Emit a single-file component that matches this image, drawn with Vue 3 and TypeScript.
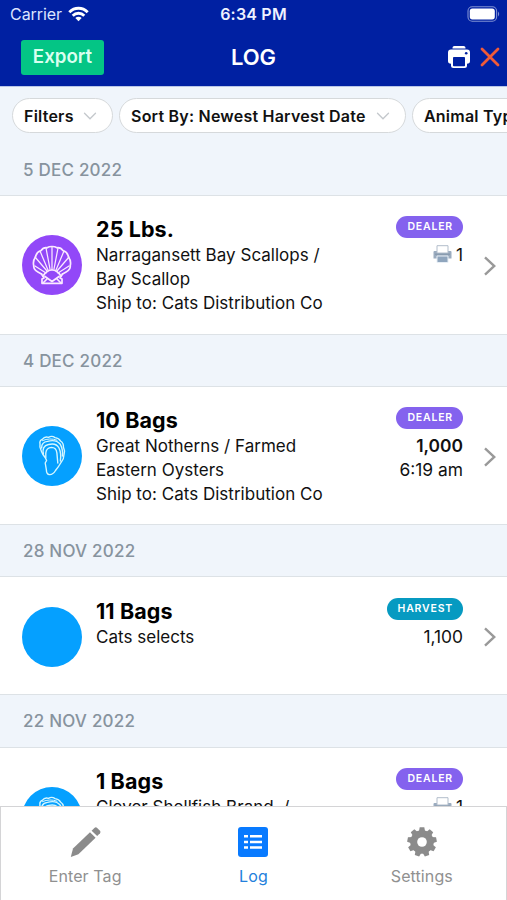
<script setup lang="ts">
type Species = 'scallop' | 'oyster' | 'none'

interface Entry {
  date: string
  species: Species
  amount: string
  lines: string[]
  badge: 'DEALER' | 'HARVEST'
  prints?: string
  count?: string
  strong?: boolean
  time?: string
  height: number
  headHeight: number
}

const filters: string[] = ['Filters', 'Sort By: Newest Harvest Date', 'Animal Type']

const entries: Entry[] = [
  {
    date: '5 DEC 2022',
    species: 'scallop',
    amount: '25 Lbs.',
    lines: ['Narragansett Bay Scallops /', 'Bay Scallop', 'Ship to: Cats Distribution Co'],
    badge: 'DEALER',
    prints: '1',
    height: 139,
    headHeight: 51,
  },
  {
    date: '4 DEC 2022',
    species: 'oyster',
    amount: '10 Bags',
    lines: ['Great Notherns / Farmed', 'Eastern Oysters', 'Ship to: Cats Distribution Co'],
    badge: 'DEALER',
    count: '1,000',
    strong: true,
    time: '6:19 am',
    height: 138,
    headHeight: 52,
  },
  {
    date: '28 NOV 2022',
    species: 'none',
    amount: '11 Bags',
    lines: ['Cats selects'],
    badge: 'HARVEST',
    count: '1,100',
    height: 118,
    headHeight: 52,
  },
  {
    date: '22 NOV 2022',
    species: 'oyster',
    amount: '1 Bags',
    lines: ['Clever Shellfish Brand  /'],
    badge: 'DEALER',
    prints: '1',
    height: 139,
    headHeight: 53,
  },
]

const ribs: string[] = [
  'M24 38 L13 31', 'M25 36 L13 22', 'M26 35 L18 16', 'M28 34 L24 13',
  'M32 34 L36 13', 'M34 35 L42 16', 'M35 36 L47 22', 'M36 38 L47 31',
  'M30 34 V12',
]
</script>

<template>
  <div class="screen">
    <header class="top">
      <div class="status">
        <div class="carrier">
          <span>Carrier</span>
          <svg width="21" height="16" viewBox="0 0 21 16" fill="none" stroke="#fff" stroke-width="2.9">
            <path d="M1.3 6.2 C6.6 1 14.4 1 19.7 6.2" />
            <path d="M4.7 9.7 C8 6.5 13 6.5 16.3 9.7" />
            <path d="M7.3 12 C9.2 10.3 11.8 10.3 13.7 12 L10.5 15.2 Z" fill="#fff" stroke="none" />
          </svg>
        </div>
        <span class="clock">6:34 PM</span>
        <svg class="battery" width="34" height="16" viewBox="0 0 34 16">
          <rect x="1" y="0.8" width="28.6" height="14.4" rx="4.2" fill="none" stroke="#7f90d2" stroke-width="1.1" />
          <rect x="2.8" y="2.6" width="25" height="10.8" rx="2.6" fill="#fff" />
          <path d="M31 5.5 Q33.4 8 31 10.5 Z" fill="#7f90d2" />
        </svg>
      </div>
      <div class="nav">
        <div class="side"><button class="export">Export</button></div>
        <h1>LOG</h1>
        <div class="side actions">
          <svg width="24" height="24" viewBox="0 0 24 24">
            <path d="M5.5 3.4 V2.8 Q5.5 1 7.4 1 H16.6 Q18.5 1 18.5 2.8 V3.4 Z" fill="#fff" />
            <path d="M4 4.4 H20 Q23 4.4 23 7.4 V16 Q23 18.7 20 18.7 V20.5 Q20 23 17.5 23 H6.5 Q4 23 4 20.5 V18.7 Q1 18.7 1 16 V7.4 Q1 4.4 4 4.4 Z" fill="#fff" />
            <rect x="6" y="12" width="12" height="9.2" rx="0.8" fill="#0020a2" />
            <circle cx="19.2" cy="8.2" r="1.3" fill="#0020a2" />
          </svg>
          <svg width="20" height="20" viewBox="0 0 20 20" fill="none" stroke="#f05a38" stroke-width="2.8" stroke-linecap="round">
            <path d="M2 2 L18 18 M18 2 L2 18" />
          </svg>
        </div>
      </div>
    </header>

    <div class="filters">
      <button v-for="(f, i) in filters" :key="f" class="pill" :class="'pill-' + i">
        <span>{{ f }}</span>
        <svg width="14" height="8" viewBox="0 0 14 8" fill="none" stroke="#c4c8cc" stroke-width="1.3" stroke-linecap="round">
          <path d="M1.5 1.2 L7 6.8 L12.5 1.2" />
        </svg>
      </button>
    </div>

    <main class="list">
      <section v-for="e in entries" :key="e.date">
        <h2 :style="{ height: e.headHeight + 'px' }">{{ e.date }}</h2>
        <article :style="{ height: e.height + 'px' }">
          <div class="avatar" :class="e.species">
            <svg v-if="e.species === 'scallop'" width="60" height="60" viewBox="0 0 60 60" fill="none" stroke="#fbeaff" stroke-width="1.7" stroke-linejoin="round" stroke-linecap="round">
              <path d="M19.5 39 Q11 35 11.8 31 Q10.5 26 13.5 22 Q14.5 17 18.8 15.8 Q21.5 12.2 25 12.8 Q27 11.5 30 11.5 Q33 11.5 35 12.8 Q38.5 12.2 41.2 15.8 Q45.5 17 46.5 22 Q49.5 26 48.2 31 Q49 35 40.5 39" />
              <path v-for="r in ribs" :key="r" :d="r" stroke-width="1.25" />
              <path d="M19.5 39 L22 43 L20 44 V48.3 H40 V44 L38 43 L40.5 39" />
              <path d="M21 41 Q25 34.8 30 34.8 Q35 34.8 39 41 M23 41.5 L30 46.5 L37 41.5 M21 48 L25 44 M39 48 L35 44" />
            </svg>
            <svg v-else-if="e.species === 'oyster'" width="60" height="60" viewBox="0 0 60 60" fill="none" stroke="#d5f6ff" stroke-width="1.4" stroke-linejoin="round" stroke-linecap="round">
              <path d="M23.5 32 Q20.5 28.5 19.3 25 Q17.2 21 18 18 Q17.2 14.5 20.5 13.2 Q22.5 10.2 26.5 11.3 Q30 9.3 33 11.6 Q37 12 38.5 15 Q41.8 17.2 41.4 21 Q43.2 24.5 42 28.5 Q42 33 39 36.5 Q36.5 41 33.5 44.5 Q31 48.8 27.5 48.6 Q24.4 48.4 24.4 44 L23.2 37 L24.6 34.5 Z" />
              <path d="M23.8 31.5 V27 Q24.5 21.6 29.5 21.4 Q34.2 21.4 34.9 27 L35.8 37" />
              <path d="M21.4 28 Q19.6 20 26.5 18.5 Q34 16.4 37 22 Q39.4 27 38.4 35" />
              <path d="M19.6 22 Q19.5 16 25.5 15.4 Q34 13 38.3 18.3 Q41.2 23.5 40.4 30" />
              <path d="M20.5 14.6 Q28 11.4 35 14.2" stroke-width="1" />
            </svg>
          </div>
          <div class="info">
            <h3>{{ e.amount }}</h3>
            <p v-for="l in e.lines" :key="l">{{ l }}</p>
          </div>
          <div class="meta">
            <span class="badge" :class="e.badge.toLowerCase()">{{ e.badge }}</span>
            <span v-if="e.prints" class="prints">
              <svg width="19" height="18" viewBox="0 0 19 18">
                <path d="M1.5 6 H17.5 Q18.5 6 18.5 7 V13.5 H.5 V7 Q.5 6 1.5 6 Z" fill="#9bacbf" />
                <path d="M4 8 V.7 H15 V8 Z" fill="#fff" stroke="#b2bdcb" stroke-width="1" />
                <path d="M2 9.2 H17" stroke="#8294a9" stroke-width="1" />
                <path d="M4 11 H15 V17.5 H4 Z" fill="#8fa5bd" stroke="#e7eef5" stroke-width="1" />
              </svg>
              <span>{{ e.prints }}</span>
            </span>
            <span v-if="e.count" class="count" :class="{ strong: e.strong }">{{ e.count }}</span>
            <span v-if="e.time" class="time">{{ e.time }}</span>
          </div>
          <svg class="chevron" width="12" height="20" viewBox="0 0 12 20" fill="none" stroke="#999" stroke-width="2.4">
            <path d="M1 1.3 L10.3 10 L1 18.7" />
          </svg>
        </article>
      </section>
    </main>

    <nav class="tabs">
      <a class="tab">
        <svg width="32" height="32" viewBox="0 0 32 32" fill="#8b8b8b">
          <path d="M22.6 4.7 L25.4 1.9 Q26.8 .7 28.2 1.9 L31 4.7 Q32 6 31 7.3 L28.2 10.1 Z" />
          <path d="M21 6.3 L26.6 11.8 L9.4 28.2 L1.8 31 L4 22.6 Z" />
        </svg>
        <span>Enter Tag</span>
      </a>
      <a class="tab active">
        <svg width="32" height="32" viewBox="0 0 32 32">
          <rect x="1" y="1" width="30" height="30" rx="3" fill="#087aff" />
          <g stroke="#fff" stroke-width="2.5">
            <path d="M7 10.3 H11 M7 15.9 H11 M7 21.5 H11" />
            <path d="M13 10.3 H25 M13 15.9 H25 M13 21.5 H25" />
          </g>
        </svg>
        <span>Log</span>
      </a>
      <a class="tab">
        <svg width="32" height="32" viewBox="0 0 32 32">
          <g fill="#8b8b8b">
            <circle cx="16" cy="16" r="11.8" />
            <path v-for="n in 9" :key="n" d="M12.7 6.5 L13.7 1.3 H18.3 L19.3 6.5 Z" :transform="`rotate(${(n - 1) * 40} 16 16)`" />
          </g>
          <circle cx="16" cy="16" r="4.8" fill="#fff" />
        </svg>
        <span>Settings</span>
      </a>
    </nav>
  </div>
</template>

<style>
body { margin: 0; overflow: hidden; }
</style>

<style scoped>
.screen {
  box-sizing: border-box;
  width: 507px;
  height: 900px;
  display: flex;
  flex-direction: column;
  overflow: hidden;
  background: #fff;
  color: #111;
  font-family: Inter, "Liberation Sans", sans-serif;
}
h1, h2, h3, p { margin: 0; }
button { font: inherit; border: 0; }
svg { display: block; flex: none; }
.top { box-sizing: border-box; height: 87px; flex: none; background: #0020a2; color: #fff; border-bottom: 1px solid #b9c6e8; }
.status {
  height: 29px;
  display: grid;
  grid-template-columns: 1fr auto 1fr;
  align-items: center;
  padding: 0 6px 0 10px;
  font-size: 16px;
}
.carrier { display: flex; align-items: center; gap: 6px; color: #dbe4ff; letter-spacing: -0.05px; }
.carrier svg { margin-top: -2px; }
.carrier span, .clock { margin-top: -1px; }
.clock { font-weight: 600; letter-spacing: 0.2px; color: #eef2ff; margin-right: 4px; }
.battery { justify-self: end; margin-top: -2px; }
.nav { height: 56px; display: grid; grid-template-columns: 1fr auto 1fr; align-items: center; padding: 0 7px 0 21px; }
.export {
  width: 83px;
  height: 35px;
  padding: 0 0 1px;
  border-radius: 3px;
  background: #04c585;
  color: #d9fff0;
  font-size: 18.7px;
  font-weight: 600;
}
h1 { font-size: 22px; font-weight: 600; margin-right: 14px; margin-top: -1px; }
.actions { display: flex; justify-content: flex-end; align-items: center; gap: 9px; }

.filters { height: 58px; flex: none; display: flex; gap: 6px; padding: 11px 0 0 12px; box-sizing: border-box; background: #f0f5fb; overflow: hidden; }
.pill {
  flex: none;
  box-sizing: border-box;
  height: 35px;
  display: flex;
  align-items: center;
  justify-content: space-between;
  padding: 0 15px 0 11px;
  border: 1px solid #d6d9db;
  border-radius: 18px;
  background: #fff;
  color: #111;
  font-size: 16px;
  font-weight: 600;
  letter-spacing: 0.22px;
  white-space: nowrap;
}
.pill-0 { width: 101px; }
.pill-1 { width: 287px; }
.pill-2 { width: 160px; }

.list { flex: 1; min-height: 0; overflow: hidden; }
h2 {
  box-sizing: border-box;
  padding: 0 23px;
  border-bottom: 1px solid #dde2e6;
  background: #f0f5fb;
  color: #87939e;
  font-size: 17px;
  line-height: 53px;
  font-weight: 500;
  letter-spacing: 0.22px;
}
section:first-child h2 { line-height: 51px; }
article { box-sizing: border-box; display: flex; border-bottom: 1px solid #dde2e6; padding: 20px 11px 0 22px; background: #fff; }
section:nth-child(3) article { padding-top: 21px; }
.avatar { width: 60px; height: 60px; border-radius: 50%; background: #05a0ff; flex: none; margin-top: 19px; }
.avatar.none { margin-top: 9px; }
.avatar.scallop { background: #9248f8; }
.info { flex: 1; margin-left: 14px; }
h3 { font-size: 21.5px; line-height: 27px; font-weight: 700; letter-spacing: 0.1px; color: #000; white-space: nowrap; }
p { font-size: 17px; line-height: 24.2px; letter-spacing: 0.02px; white-space: pre; }
.meta { display: flex; flex-direction: column; align-items: flex-end; font-size: 17.4px; line-height: 24px; }
.badge {
  height: 22px;
  margin-bottom: 5px;
  padding: 0 10px 0 11px;
  border-radius: 11px;
  color: #fff;
  font-size: 10.5px;
  line-height: 22px;
  font-weight: 600;
  letter-spacing: 0.8px;
}
.dealer { background: #8462ee; }
.harvest { background: #069ac1; }
.prints { display: flex; align-items: center; gap: 4px; }
.prints svg { margin-top: -3px; }
.strong { font-weight: 600; }
.chevron { margin: 40px 0 0 21px; }
article:has(.none) .chevron { margin-top: 29px; }

.tabs { box-sizing: border-box; height: 94px; flex: none; display: grid; grid-template-columns: repeat(3, 1fr); border: 1px solid #d4d4d6; border-bottom: 0; background: #fff; }
.tab { display: flex; flex-direction: column; align-items: center; padding-top: 19px; gap: 8px; color: #909090; font-size: 16px; line-height: 20px; letter-spacing: 0.1px; }
.active { color: #2380dc; }
</style>
